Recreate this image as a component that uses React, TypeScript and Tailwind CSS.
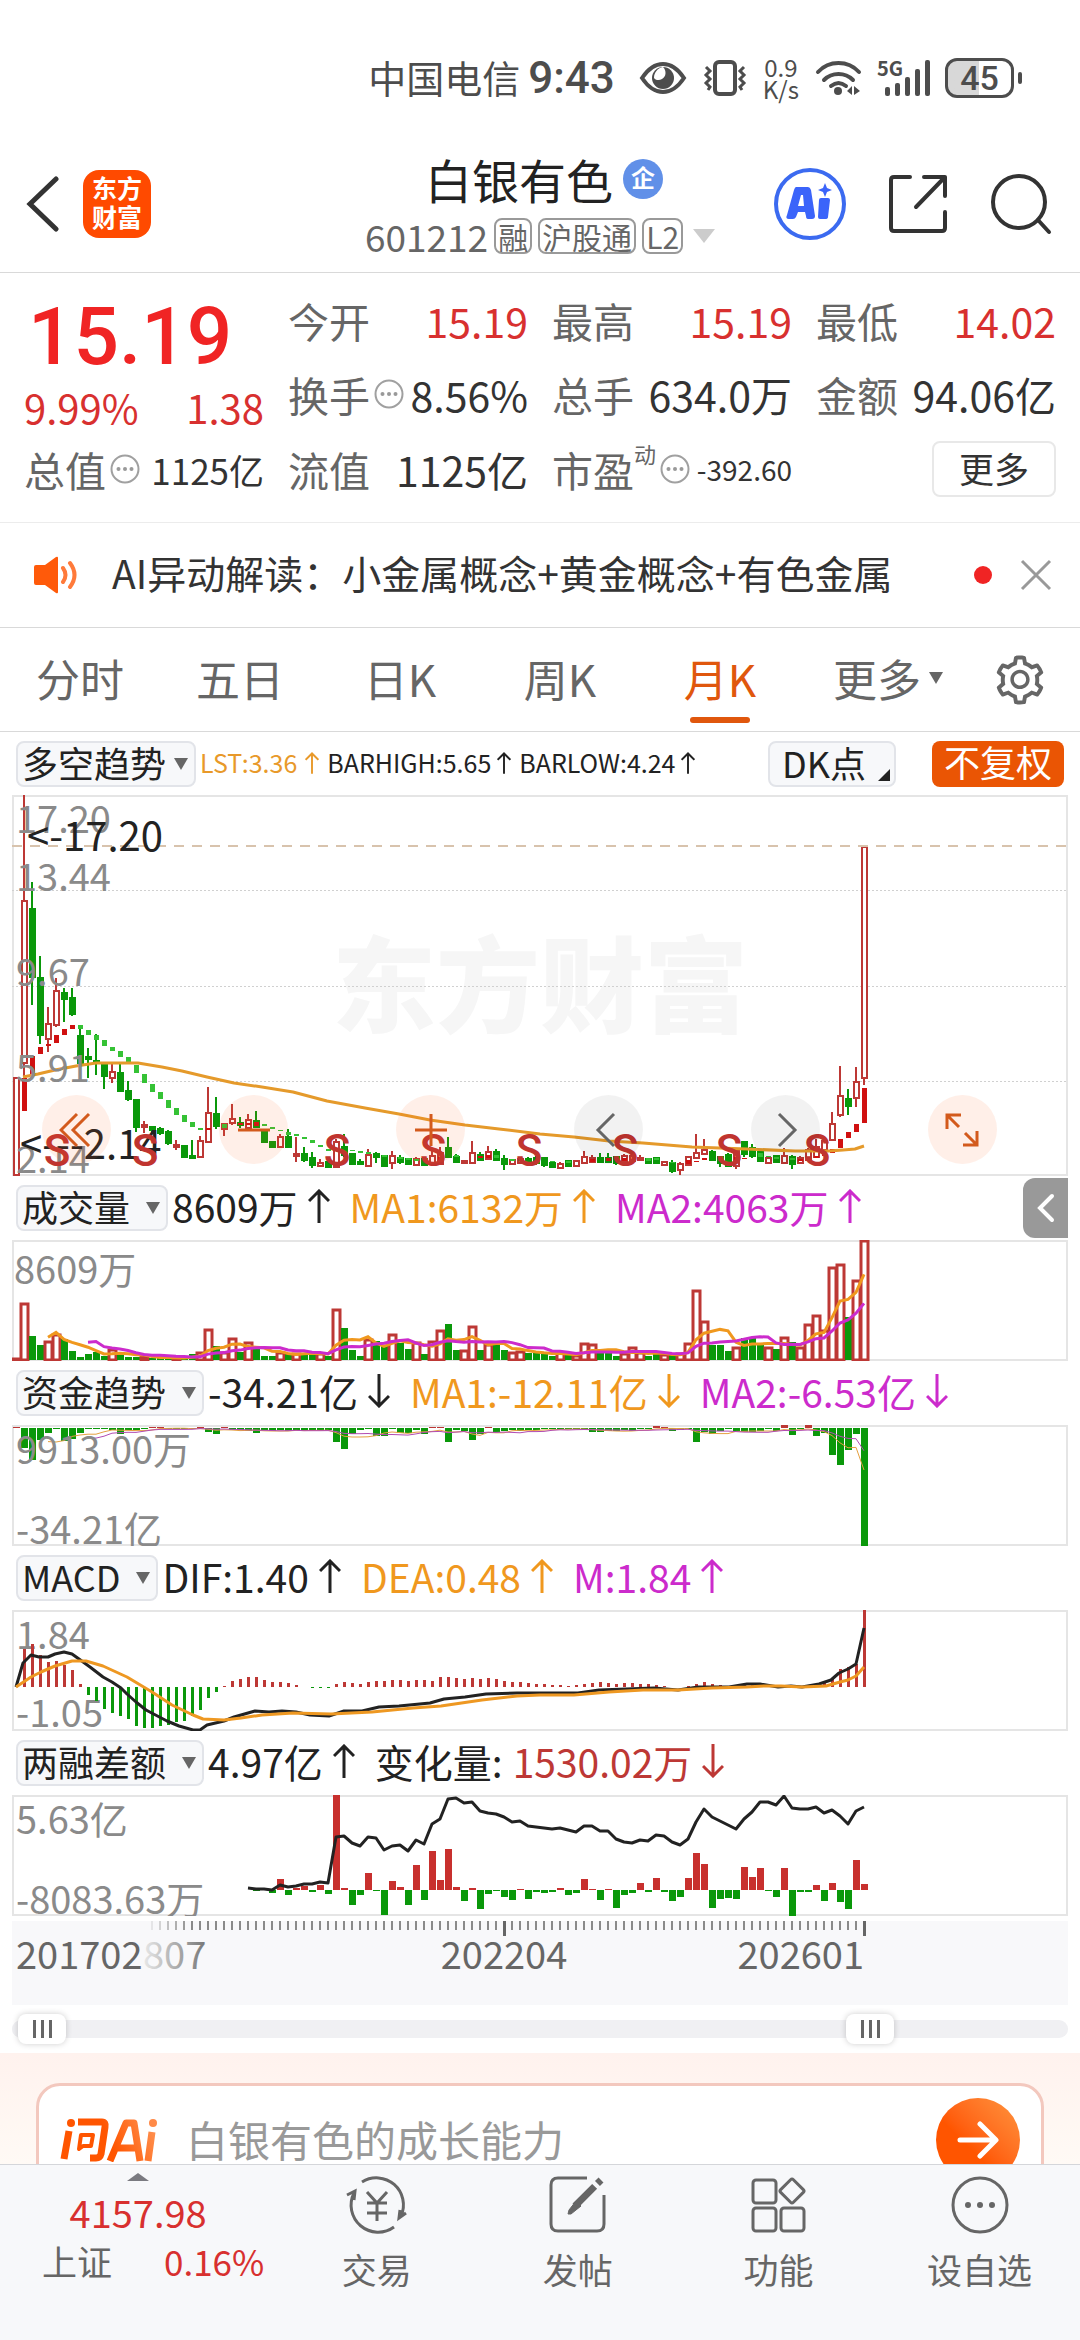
import React from "react";
import { AiOutlineSetting } from "react-icons/ai";

type Candle = [high: number, top: number, bottom: number, low: number, up: 0 | 1];

const STEP = 8;
const xAt = (i: number) => 4 + i * STEP;

const RED = "#bd3835";
const GREEN = "#0a980a";

// monthly candles, in chart units measured down from the top of the panel
const candles: Candle[] = [
  [283, 283, 380, 380, 1], [0, 106, 268, 281, 1], [87, 114, 182, 210, 0], [161, 183, 240, 249, 0],
  [212, 229, 244, 257, 1], [183, 196, 230, 232, 1], [193, 198, 204, 227, 0], [193, 203, 219, 221, 0],
  [233, 241, 268, 268, 0], [253, 262, 264, 283, 0], [239, 266, 268, 280, 0], [269, 270, 281, 294, 0],
  [269, 277, 283, 288, 1], [269, 278, 296, 297, 0], [286, 296, 304, 306, 0], [304, 305, 332, 337, 0],
  [326, 330, 332, 338, 1], [331, 332, 335, 339, 0], [332, 334, 338, 340, 0], [335, 337, 348, 350, 0],
  [345, 350, 352, 355, 1], [350, 351, 362, 363, 0], [345, 361, 363, 363, 0], [341, 346, 362, 362, 1],
  [292, 318, 347, 347, 1], [302, 319, 331, 334, 0], [328, 329, 334, 341, 1], [309, 324, 328, 330, 1],
  [322, 328, 330, 333, 0], [319, 325, 333, 333, 1], [316, 326, 332, 332, 0], [334, 335, 347, 348, 0],
  [346, 347, 352, 353, 0], [339, 342, 352, 352, 1], [334, 342, 352, 352, 0], [342, 359, 361, 367, 1],
  [352, 359, 365, 367, 0], [357, 363, 370, 373, 0], [364, 368, 371, 371, 1], [365, 367, 372, 372, 0],
  [344, 347, 372, 372, 1], [339, 352, 360, 362, 0], [358, 359, 369, 369, 0], [364, 367, 369, 369, 0],
  [354, 360, 371, 371, 1], [357, 359, 362, 368, 0], [360, 361, 371, 371, 0], [356, 361, 368, 374, 1],
  [360, 363, 367, 369, 0], [363, 364, 369, 369, 0], [362, 364, 370, 370, 1], [362, 364, 370, 370, 0],
  [354, 361, 368, 370, 1], [352, 358, 369, 370, 1], [342, 353, 362, 363, 0], [359, 362, 367, 368, 0],
  [365, 366, 368, 368, 1], [346, 358, 368, 368, 1], [357, 360, 365, 366, 0], [351, 357, 364, 364, 1],
  [354, 357, 365, 366, 0], [360, 364, 369, 375, 0], [364, 365, 369, 369, 1], [362, 364, 368, 369, 1],
  [362, 364, 368, 369, 0], [361, 363, 368, 370, 0], [362, 363, 370, 372, 0], [367, 368, 372, 373, 0],
  [367, 369, 373, 374, 1], [365, 366, 371, 372, 0], [365, 366, 371, 371, 1], [356, 362, 368, 369, 1],
  [360, 363, 367, 368, 1], [358, 363, 367, 367, 0], [358, 363, 367, 368, 0], [361, 362, 368, 370, 0],
  [359, 361, 367, 367, 1], [358, 361, 366, 367, 1], [360, 363, 365, 366, 1], [363, 364, 368, 369, 0],
  [362, 363, 368, 369, 0], [366, 367, 370, 371, 1], [365, 368, 376, 378, 0], [367, 369, 375, 380, 1],
  [361, 362, 370, 370, 1], [339, 358, 363, 364, 1], [344, 355, 359, 359, 1], [355, 357, 365, 366, 0],
  [361, 362, 368, 372, 0], [358, 360, 371, 371, 0], [354, 356, 371, 374, 1], [346, 347, 359, 362, 0],
  [349, 353, 361, 363, 0], [356, 357, 366, 367, 0], [361, 363, 368, 369, 1], [360, 361, 367, 368, 0],
  [353, 361, 368, 369, 1], [360, 362, 369, 374, 0], [361, 363, 368, 368, 1], [353, 355, 365, 365, 1],
  [344, 352, 362, 363, 1], [344, 346, 355, 358, 1], [317, 329, 345, 346, 1], [271, 301, 320, 322, 1],
  [294, 304, 311, 320, 0], [272, 287, 303, 312, 1], [51, 52, 283, 290, 1],
];

// trend blocks: [index, top, bottom, up]
const blocks: [number, number, number, 0 | 1][] = [
  [1, 283, 316, 1], [2, 261, 281, 1], [3, 252, 259, 1], [4, 249, 251, 1], [5, 240, 248, 1],
  [6, 234, 240, 1], [7, 230, 234, 1], [8, 230, 234, 0], [9, 235, 240, 0], [10, 240, 245, 0],
  [11, 245, 251, 0], [12, 252, 256, 0], [13, 256, 262, 0], [14, 262, 267, 0], [15, 270, 278, 0],
  [16, 279, 288, 0], [17, 289, 297, 0], [18, 297, 304, 0], [19, 305, 313, 0], [20, 313, 320, 0],
  [21, 320, 327, 0], [22, 327, 332, 0], [23, 333, 335, 0], [24, 333, 335, 1], [26, 329, 333, 0],
  [28, 328, 330, 1], [29, 328, 330, 1], [30, 327, 331, 1], [31, 329, 331, 0], [32, 332, 334, 0],
  [33, 335, 336, 0], [34, 337, 340, 0], [35, 339, 341, 0], [36, 342, 344, 0], [37, 345, 348, 0],
  [38, 350, 352, 0], [39, 354, 356, 0], [42, 355, 356, 0], [43, 356, 358, 0], [44, 357, 359, 0],
  [46, 360, 362, 0], [48, 362, 364, 0], [49, 363, 365, 0], [50, 364, 366, 0], [51, 363, 365, 0],
  [53, 362, 366, 1], [55, 360, 362, 0], [58, 361, 363, 1], [59, 360, 363, 1], [60, 360, 363, 0],
  [62, 364, 366, 0], [63, 364, 366, 0], [65, 365, 367, 0], [67, 366, 367, 0], [69, 366, 368, 0],
  [72, 364, 367, 1], [74, 363, 366, 1], [76, 363, 366, 1], [79, 363, 366, 0], [80, 363, 365, 0],
  [82, 367, 368, 0], [84, 365, 369, 1], [85, 366, 367, 1], [86, 363, 365, 1], [88, 364, 366, 0],
  [90, 362, 366, 1], [91, 363, 364, 1], [93, 358, 362, 0], [94, 361, 362, 0], [95, 362, 364, 0],
  [97, 363, 365, 0], [98, 364, 366, 1], [100, 361, 363, 1], [101, 359, 361, 1], [102, 354, 358, 1],
  [103, 344, 353, 1], [104, 337, 343, 1], [105, 329, 337, 1], [106, 293, 328, 1],
];

const volume = [
  1, 56, 24, 15, 18, 25, 21, 9, 3, 6, 8, 4, 10, 6, 3, 3, 3, 2, 2, 2, 2, 2, 6, 7, 30, 14, 7, 21, 8, 17,
  11, 4, 4, 7, 7, 6, 7, 7, 6, 4, 50, 32, 10, 4, 20, 19, 15, 25, 17, 11, 17, 6, 18, 29, 36, 10, 9, 33,
  10, 15, 15, 10, 7, 8, 7, 8, 6, 4, 7, 5, 4, 16, 15, 8, 8, 4, 6, 12, 7, 4, 6, 5, 5, 6, 16, 69, 38, 15,
  15, 9, 12, 22, 22, 15, 12, 11, 22, 18, 12, 35, 44, 29, 92, 95, 43, 79, 119,
];

const funds = [
  1, -20, -32, -12, -5, -1, -13, -11, -5, -1, -1, -1, -2, -6, -2, -2, -1, 1, 1, -1, -1, -1, -1, 1, -4,
  -6, 1, -2, -2, -3, -5, -2, -3, -2, -3, -2, -3, -2, -2, -2, -14, -21, -6, -2, -1, -8, -8, -1, -5, -5,
  -2, -6, 1, 1, -14, -2, -3, -12, -6, 1, -4, -3, -2, -3, -2, -2, -1, -1, -1, -1, -1, -1, -4, -4, -3,
  -3, -2, -3, -1, -1, 2, 1, -3, -2, -1, -14, -4, -6, -3, -1, -3, -4, -4, -3, -1, -3, 3, -7, -1, 3, -8,
  -5, -27, -37, -22, -6, -118,
];

const macd = [
  0, 38, 43, 32, 25, 26, 22, 17, 3, -8, -14, -22, -26, -29, -32, -39, -41, -41, -39, -38, -35, -34,
  -29, -23, -11, -5, 1, 6, 8, 10, 10, 7, 5, 5, 4, 2, 0, -1, -1, -1, 3, 5, 4, 3, 5, 6, 6, 7, 7, 6, 7, 7,
  6, 10, 10, 9, 8, 9, 8, 9, 8, 6, 5, 5, 4, 3, 3, 2, 2, 1, 2, 3, 4, 5, 4, 3, 4, 4, 3, 3, 2, 1, 0, 0, 1,
  3, 5, 3, 2, 1, 2, 3, 3, 2, 1, 0, 1, 1, 0, 1, 2, 4, 9, 18, 20, 23, 77,
];

// margin balance change, first value is for month 30
const margin = [
  -1, 0, -3, 11, -5, 2, 4, -2, 5, -4, 95, 2, -15, -5, 17, -1, -25, 9, 3, -15, 25, -10, 39, 10, 41, 3,
  -11, 2, -19, -4, -1, -7, -10, 1, -9, -2, -3, -2, 2, -5, -3, 11, 1, -10, 1, -18, -5, -3, 7, -2, 12,
  -2, -11, -7, 12, 37, 26, -18, -9, -8, -9, 23, 13, 22, -1, -7, 22, -26, -2, -2, 5, -11, 7, -12, -19,
  30, 6,
];

const marginLine = [
  93, 94, 94, 95, 90, 92, 91, 89, 89, 87, 88, 42, 41, 48, 51, 42, 43, 55, 51, 50, 56, 45, 49, 29, 24, 4,
  3, 8, 7, 16, 18, 19, 22, 27, 26, 31, 32, 33, 34, 33, 35, 37, 31, 31, 36, 36, 44, 47, 48, 45, 46, 40,
  41, 47, 50, 44, 27, 14, 22, 26, 30, 34, 24, 17, 7, 7, 10, 1, 13, 14, 14, 12, 18, 15, 21, 29, 16, 12,
];

const lstLine =
  "11,282 26,279 43,275 64,271 84,268 105,268 126,268 150,272 170,276 195,282 222,288 250,292 281,297 315,306 353,313 387,319 418,325 453,330 487,334 528,339 562,342 597,346 631,348 680,352 735,354 783,356 817,356 831,355 843,354 852,351";
const difLine =
  "4,77 11,53 19,45 27,47 36,47 43,44 52,42 60,44 67,49 78,57 91,67 100,72 109,78 115,84 124,92 134,100 155,111 167,116 181,120 188,120 195,115 212,111 222,107 243,101 257,102 270,101 284,102 298,105 317,106 332,101 350,101 367,97 387,96 418,93 432,89 453,87 474,84 505,83 528,83 549,83 566,83 587,80 614,79 642,78 666,80 686,77 704,77 717,77 735,74 748,74 766,77 779,76 790,77 807,74 819,70 827,63 836,59 844,54 852,18";
const deaLine =
  "4,77 19,67 29,62 43,56 60,51 74,51 91,56 115,67 140,82 160,95 181,105 191,109 212,110 229,108 250,105 281,103 319,104 360,102 401,98 429,96 470,90 505,86 528,85 562,85 597,82 631,80 666,80 700,78 735,77 752,76 769,76 790,77 814,76 828,72 836,70 844,66 852,57";

function averageLine(values: number[], days: number, zero: number) {
  const points: string[] = [];
  for (let i = days - 1; i < values.length; i++) {
    let sum = 0;
    for (let j = 0; j < days; j++) sum += values[i - j];
    points.push(`${xAt(i)},${(zero - sum / days).toFixed(1)}`);
  }
  return points.join(" ");
}

function Caret() {
  return (
    <svg viewBox="0 0 14 12" className="h-3 w-3.5 shrink-0 fill-[#666]">
      <path d="M0 0h14L7 12z" />
    </svg>
  );
}

function Arrow({ down = false, small = false }: { down?: boolean; small?: boolean }) {
  return (
    <svg
      viewBox="0 0 22 34"
      className={small ? "h-[22px] w-3.5" : "h-[34px] w-[22px]"}
      fill="none"
      stroke="currentColor"
      strokeWidth="3"
    >
      {down ? <path d="M11 0v32M1 22l10 10 10-10" /> : <path d="M11 34V2M1 12L11 2l10 10" />}
    </svg>
  );
}

function InfoDots() {
  return (
    <svg viewBox="0 0 30 30" className="ml-1 size-[30px] shrink-0" aria-hidden="true">
      <circle cx="15" cy="15" r="13.5" fill="none" stroke="#a0a0a0" strokeWidth="2" />
      <g fill="#999">
        <circle cx="8.5" cy="15" r="2" />
        <circle cx="15" cy="15" r="2" />
        <circle cx="21.5" cy="15" r="2" />
      </g>
    </svg>
  );
}

function StatusBar() {
  return (
    <div className="flex h-[136px] items-center justify-end pt-5 pr-[58px] text-[#4d4d4d]">
      <span className="pb-0.5 text-[38px] leading-none">中国电信</span>
      <span className="ml-2 font-['Roboto','Noto_Sans_CJK_SC',sans-serif] text-[44px] leading-none font-medium">9:43</span>
      <svg viewBox="0 0 48 34" className="ml-6 h-[34px] w-12">
        <path d="M3 17C9 8 16 3 24 3s15 5 21 14c-6 9-13 14-21 14S9 26 3 17z" fill="none" stroke="#4d4d4d" strokeWidth="4" />
        <circle cx="24" cy="17" r="11" fill="#4d4d4d" />
        <path d="M24 6c4 4 3 10-1 12-3 2-7 1-8-1 0-6 4-10 9-11z" fill="#fff" />
      </svg>
      <svg viewBox="0 0 44 36" className="ml-4 h-9 w-11" fill="none" stroke="#4d4d4d">
        <rect x="12" y="2" width="20" height="32" rx="4" strokeWidth="4" />
        <path d="M3 7l4 4-4 4 4 4-4 4 4 4-2 3M41 7l-4 4 4 4-4 4 4 4-4 4 2 3" strokeWidth="3" />
      </svg>
      <span className="ml-4 text-center text-2xl leading-[22px]">
        0.9
        <br />
        K/s
      </span>
      <svg viewBox="0 0 48 36" className="ml-4 h-9 w-12" fill="none" stroke="#4d4d4d" strokeWidth="4" strokeLinecap="round">
        <path d="M3 12C14 0 33 0 44 12M9 20c8-8 21-8 29 0M16 26c5-4 10-4 15 0" />
        <circle cx="23" cy="31" r="4" fill="#4d4d4d" stroke="none" />
        <path d="M32 31l5-5v9zM39 26l6 5-6 4z" fill="#4d4d4d" stroke="none" />
      </svg>
      <svg viewBox="0 0 54 38" className="ml-3.5 h-[38px] w-[54px]" fill="#4d4d4d">
        <text x="0" y="17" fontSize="20" fontWeight="700">5G</text>
        <rect x="8" y="28" width="5" height="9" rx="2" />
        <rect x="18" y="24" width="5" height="13" rx="2" />
        <rect x="28" y="18" width="5" height="19" rx="2" />
        <rect x="38" y="10" width="5" height="27" rx="2" />
        <rect x="48" y="1" width="5" height="36" rx="2" />
      </svg>
      <div className="ml-3.5 flex h-10 w-[69px] items-center justify-center rounded-xl border-[3px] border-[#4d4d4d] bg-linear-to-r from-[#d8d8d8] from-50% to-white to-50% font-['Roboto','Noto_Sans_CJK_SC',sans-serif] text-[34px] leading-none font-medium">
        45
      </div>
      <span className="ml-1 h-3 w-1 rounded-full bg-[#4d4d4d]" />
    </div>
  );
}

function TitleBar() {
  return (
    <header className="grid h-[137px] grid-cols-[1fr_auto_1fr] items-center border-b border-[#d9d9d9]">
      <div className="flex items-center gap-6 pl-[26px]">
        <button aria-label="返回">
          <svg viewBox="0 0 33 56" className="h-14 w-[33px]" fill="none" stroke="#333" strokeWidth="5" strokeLinecap="round">
            <path d="M30 3L4 28l26 25" />
          </svg>
        </button>
        <div className="flex size-[68px] items-center justify-center rounded-2xl bg-[#ff4a00] pb-1 text-center text-[25px] leading-[29px] font-bold text-white">
          东方
          <br />
          财富
        </div>
      </div>
      <div className="flex flex-col items-center gap-3.5">
        <h1 className="flex items-center gap-2.5 pl-2 text-[47px] leading-[50px] text-[#222]">
          白银有色
          <span className="flex size-10 items-center justify-center rounded-full bg-[#6190e8] pb-1 text-2xl font-bold text-white">
            企
          </span>
        </h1>
        <div className="flex items-center gap-1.5 leading-[32px] text-[#666]">
          <span className="text-[37px] leading-9">601212</span>
          <span className="rounded-lg border-2 border-[#999] px-0.5 text-[30px]">融</span>
          <span className="rounded-lg border-2 border-[#999] px-0.5 text-[30px]">沪股通</span>
          <span className="rounded-lg border-2 border-[#999] px-0.5 text-[30px]">L2</span>
          <svg viewBox="0 0 22 14" className="ml-1 h-3.5 w-[22px] fill-[#ccc]">
            <path d="M0 0h22L11 14z" />
          </svg>
        </div>
      </div>
      <div className="flex items-center justify-end gap-[42px] pr-7">
        <button aria-label="AI">
          <svg viewBox="0 0 72 72" className="size-[72px]" fill="#3b64fa">
            <circle cx="36" cy="36" r="34" fill="none" stroke="#3b6af0" strokeWidth="4" />
            <path
              fillRule="evenodd"
              d="M22 19h12q2 0 3 3l4 26q0 3-3 3h-4q-2 0-2-3l-1-4h-7l-2 5q-1 2-3 2h-4q-4 0-2-4l7-25q1-3 2-3zM27 27l-3 11h6l-1-11z"
            />
            <path d="M47 30h7q2 0 2 2l-2 17q0 2-3 2h-5q-2 0-2-2l1-17q0-2 2-2z" />
            <path d="M51 15l2 5 5 2-5 2-2 5-2-5-5-2 5-2z" />
          </svg>
        </button>
        <button aria-label="分享">
          <svg viewBox="0 0 60 60" className="size-[60px]" fill="none" stroke="#333" strokeWidth="4" strokeLinecap="round" strokeLinejoin="round">
            <path d="M22 3H6q-3 0-3 3v48q0 3 3 3h48q3 0 3-3V38M36 3h21v19M57 3L28 33" />
          </svg>
        </button>
        <button aria-label="搜索">
          <svg viewBox="0 0 62 62" className="size-[62px]" fill="none" stroke="#333" strokeWidth="4" strokeLinecap="round">
            <circle cx="29" cy="29" r="26" />
            <path d="M48 47l11 12" />
          </svg>
        </button>
      </div>
    </header>
  );
}

function Quote({ label, value, red = false, info = false }: { label: string; value: string; red?: boolean; info?: boolean }) {
  return (
    <div className="flex items-center justify-between whitespace-nowrap">
      <dt className="flex items-center text-[#666]">
        {label}
        {info && <InfoDots />}
      </dt>
      <dd className={red ? "text-[#d8302f]" : "text-[#333]"}>{value}</dd>
    </div>
  );
}

function QuotePanel() {
  return (
    <section className="border-b border-[#ececec] px-6 pt-2.5 pb-[15px]">
      <dl className="grid grid-cols-4 grid-rows-[74px_74px_76px] gap-x-6 text-[41px] leading-none">
        <div className="row-span-2 text-[#f02424]">
          <dt className="sr-only">最新价</dt>
          <dd className="flex h-24 items-center pt-3 pl-1 font-['Roboto','Noto_Sans_CJK_SC',sans-serif] text-[80px] font-medium">
            15.19
          </dd>
          <dd className="flex h-14 items-center justify-between text-[40px] text-[#d8302f]">
            <span>9.99%</span>
            <span>1.38</span>
          </dd>
        </div>
        <Quote label="今开" value="15.19" red />
        <Quote label="最高" value="15.19" red />
        <Quote label="最低" value="14.02" red />
        <Quote label="换手" value="8.56%" info />
        <Quote label="总手" value="634.0万" />
        <Quote label="金额" value="94.06亿" />
        <div className="flex items-center justify-between whitespace-nowrap">
          <dt className="flex items-center text-[#666]">
            总值
            <InfoDots />
          </dt>
          <dd className="text-[35px] text-[#333]">1125亿</dd>
        </div>
        <Quote label="流值" value="1125亿" />
        <div className="flex items-center justify-between whitespace-nowrap">
          <dt className="flex items-center text-[#666]">
            市盈
            <span className="pb-8 text-[22px] leading-none">动</span>
            <InfoDots />
          </dt>
          <dd className="text-[28px] text-[#333]">-392.60</dd>
        </div>
        <div className="flex items-center justify-end">
          <button className="h-14 w-[124px] rounded-lg border-2 border-[#e8e8e8] pb-1 text-[35px] leading-none text-[#333]">
            更多
          </button>
        </div>
      </dl>
    </section>
  );
}

function AlertBar() {
  return (
    <section className="flex h-[105px] items-center border-b border-[#d9d9d9] pr-7 pl-[34px]">
      <svg viewBox="0 0 46 38" className="h-[38px] w-[46px]" fill="#ff5a0a">
        <path d="M2 9h9L22 1q2-1 2 1v34q0 2-2 1l-11-8H2q-2 0-2-2V11q0-2 2-2z" />
        <path d="M29 12q5 7 0 14M36 7q9 12 0 24" fill="none" stroke="#ff7a3a" strokeWidth="4" strokeLinecap="round" />
      </svg>
      <p className="ml-8 pb-1.5 text-[39px] leading-none whitespace-nowrap text-[#333]">
        AI异动解读：小金属概念+黄金概念+有色金属
      </p>
      <span className="ml-auto size-[18px] rounded-full bg-[#f02424]" />
      <button aria-label="关闭" className="ml-7">
        <svg viewBox="0 0 32 32" className="size-8" stroke="#999" strokeWidth="3">
          <path d="M2 2l28 28M30 2L2 30" />
        </svg>
      </button>
    </section>
  );
}

const periods = ["分时", "五日", "日K", "周K", "月K"];

function PeriodTabs() {
  return (
    <nav className="grid h-[104px] grid-cols-[repeat(6,4fr)_3fr] border-b border-[#d9d9d9] text-[44px] leading-none text-[#666]">
      {periods.map((name) => (
        <button
          key={name}
          className={name === "月K" ? "relative pb-1 text-[#e0570d]" : "pb-1"}
          aria-current={name === "月K"}
        >
          {name}
          {name === "月K" && (
            <span className="absolute inset-x-0 bottom-2 mx-auto h-1.5 w-[60px] rounded-full bg-[#e0570d]" />
          )}
        </button>
      ))}
      <button className="flex items-center justify-center gap-2 pb-1 pl-4">
        更多
        <Caret />
      </button>
      <button aria-label="设置" className="flex items-center justify-center">
        <AiOutlineSetting className="size-[56px]" />
      </button>
    </nav>
  );
}

function Chip({ children, tight = false }: { children: string; tight?: boolean }) {
  return (
    <button
      className={`flex h-[46px] items-center rounded-lg border-2 border-[#e2e4e9] bg-[#f7f8fa] pr-1.5 pl-1 text-[36px] leading-none text-[#222] ${tight ? "gap-2" : "gap-4"}`}
    >
      <span className="pb-1">{children}</span>
      <Caret />
    </button>
  );
}

type LegendItem = { text: string; color: string; down?: boolean; label?: string };

function Legend({ name, items, children }: { name: string; items: LegendItem[]; children?: React.ReactNode }) {
  return (
    <div className="flex h-16 items-center pl-1 text-[39px] leading-none whitespace-nowrap">
      <Chip>{name}</Chip>
      <div className="flex items-center gap-5 pb-1 pl-1">
        {items.map((item) => (
          <span key={item.text} className={`flex items-center gap-2.5 ${item.color}`}>
            {item.label && <span className="text-[#222]">{item.label}</span>}
            {item.text}
            <Arrow down={item.down} />
          </span>
        ))}
      </div>
      {children}
    </div>
  );
}

function Panel({ height, label, children }: { height: number; label: string; children: React.ReactNode }) {
  return (
    <svg viewBox={`0 0 1056 ${height}`} className="block w-full" role="img" aria-label={label}>
      <rect x="1" y="1" width="1054" height={height - 2} fill="none" stroke="#e5e5e5" strokeWidth="2" />
      {children}
    </svg>
  );
}

function AxisText({ x = 4, y, children }: { x?: number; y: number; children: string }) {
  return (
    <text x={x} y={y} fontSize="38" fill="#8a8a8a">
      {children}
    </text>
  );
}

function ToolButton({ label, gray = false, children }: { label: string; gray?: boolean; children: React.ReactNode }) {
  return (
    <button
      aria-label={label}
      className={`flex size-[69px] items-center justify-center rounded-full ${gray ? "bg-black/5 text-[#666]" : "bg-[#ff6020]/10 text-[#d35a1c]"}`}
    >
      <svg viewBox="0 0 36 36" className="size-9" fill="none" stroke="currentColor" strokeWidth="3">
        {children}
      </svg>
    </button>
  );
}

function KLine() {
  return (
    <div className="relative">
      <Panel height={381} label="月K线">
        <text x="320" y="230" fontSize="104" fontWeight="900" fill="#f6f6f6">
          东方财富
        </text>
        <g stroke="#d0d0d0" strokeDasharray="2 2">
          <path d="M0 95.5h1056M0 191.5h1056M0 286.5h1056" />
        </g>
        {candles.map(([high, top, bottom, low, up], i) => {
          const color = up ? RED : GREEN;
          return (
            <g key={i} stroke={color} strokeWidth="2">
              <path d={`M${xAt(i)} ${high}V${top}M${xAt(i)} ${bottom}V${low}`} />
              <rect x={xAt(i) - 2} y={top} width="5" height={bottom - top} fill={up ? "#fff" : color} />
            </g>
          );
        })}
        {blocks.map(([i, top, bottom, up]) => (
          <rect key={i} x={xAt(i) - 2} y={top} width="5" height={bottom - top} fill={up ? "#d01010" : "#35c235"} />
        ))}
        <path d="M0 51h1056" stroke="#d8c3ad" strokeWidth="2" strokeDasharray="10 8" />
        <polyline points={lstLine} fill="none" stroke="#e59a2b" strokeWidth="3" strokeLinejoin="round" />
        <AxisText y={38}>17.20</AxisText>
        <AxisText y={96}>13.44</AxisText>
        <AxisText y={191}>9.67</AxisText>
        <AxisText y={287}>5.91</AxisText>
        <AxisText y={378}>2.14</AxisText>
        <g fontSize="40" fill="#222">
          <text x="15" y="56">&lt;-17.20</text>
          <text x="8" y="364">&lt;---2.14</text>
        </g>
        <g
          className="font-['Roboto','Noto_Sans_CJK_SC',sans-serif]"
          fontSize="44"
          fontWeight="500"
          fill="#c0342f"
          textAnchor="middle"
        >
          {[45, 133, 325, 421, 517, 613, 717, 805].map((x) => (
            <text key={x} x={x} y="371">
              S
            </text>
          ))}
        </g>
      </Panel>
      <div className="absolute right-[71px] bottom-3 left-[30px] flex justify-between">
        <ToolButton label="最早">
          <path d="M18 2L2 18l16 16M30 2L14 18l16 16" />
        </ToolButton>
        <ToolButton label="缩小">
          <path d="M2 18h32" />
        </ToolButton>
        <ToolButton label="放大">
          <path d="M2 18h32M18 2v32" />
        </ToolButton>
        <ToolButton label="左移" gray>
          <path d="M24 2L8 18l16 16" />
        </ToolButton>
        <ToolButton label="右移" gray>
          <path d="M12 2l16 16-16 16" />
        </ToolButton>
        <ToolButton label="全屏">
          <path d="M17 3H3v14M3 3l12 12M19 33h14V19M33 33L21 21" />
        </ToolButton>
      </div>
    </div>
  );
}

function VolumePanel() {
  return (
    <Panel height={121} label="成交量">
      {volume.map((h, i) =>
        candles[i][4] ? (
          <rect key={i} x={xAt(i) - 3} y={120 - h} width="7" height={h} fill="#fff" stroke={RED} strokeWidth="3" />
        ) : (
          <rect key={i} x={xAt(i) - 3} y={120 - h} width="7" height={h} fill={GREEN} />
        ),
      )}
      <polyline points={averageLine(volume, 5, 120)} fill="none" stroke="#f0981e" strokeWidth="3" />
      <polyline points={averageLine(volume, 10, 120)} fill="none" stroke="#cc2bcc" strokeWidth="3" />
      <AxisText x={2} y={44}>8609万</AxisText>
    </Panel>
  );
}

function FundsPanel() {
  return (
    <Panel height={121} label="资金趋势">
      {funds.map((v, i) => (
        <rect key={i} x={xAt(i) - 3} y={v > 0 ? 3 - v : 3} width="7" height={Math.abs(v)} fill={v > 0 ? RED : GREEN} />
      ))}
      <polyline points={averageLine(funds, 5, 3)} fill="none" stroke="#e5a040" />
      <polyline points={averageLine(funds, 10, 3)} fill="none" stroke="#b24bb2" />
      <AxisText y={39}>9913.00万</AxisText>
      <AxisText y={119}>-34.21亿</AxisText>
    </Panel>
  );
}

function MacdPanel() {
  return (
    <Panel height={121} label="MACD">
      <AxisText y={39}>1.84</AxisText>
      <AxisText y={117}>-1.05</AxisText>
      {macd.map((v, i) => (
        <rect key={i} x={xAt(i) - 1} y={v > 0 ? 77 - v : 77} width="3" height={Math.abs(v)} fill={v > 0 ? RED : GREEN} />
      ))}
      <polyline points={difLine} fill="none" stroke="#222" strokeWidth="3" strokeLinejoin="round" />
      <polyline points={deaLine} fill="none" stroke="#ee9822" strokeWidth="3" strokeLinejoin="round" />
    </Panel>
  );
}

function MarginPanel() {
  return (
    <Panel height={121} label="两融差额">
      {margin.map((v, i) => (
        <rect key={i} x={xAt(i + 30) - 3} y={v > 0 ? 95 - v : 95} width="7" height={Math.abs(v)} fill={v > 0 ? "#c8302e" : GREEN} />
      ))}
      <polyline
        points={marginLine.map((y, i) => `${xAt(i + 29)},${y}`).join(" ")}
        fill="none"
        stroke="#222"
        strokeWidth="3"
        strokeLinejoin="round"
      />
      <AxisText y={39}>5.63亿</AxisText>
      <AxisText y={119}>-8083.63万</AxisText>
    </Panel>
  );
}

function TimeAxis() {
  const ticks = Array.from({ length: 90 }, (_, i) => i + 17);
  return (
    <svg viewBox="0 0 1056 84" className="mt-[5px] block w-full bg-[#f8f8fa]">
      <defs>
        <linearGradient id="fade">
          <stop offset="0" stopColor="#e8e8e8" />
          <stop offset="1" stopColor="#777" />
        </linearGradient>
      </defs>
      {ticks.map((i) => {
        const major = i === 61 || i === 106;
        return (
          <rect
            key={i}
            x={xAt(i) - 1}
            y="0"
            width={major ? 3 : 2}
            height={major ? 15 : 9}
            fill={major ? "#666" : "#8a8a8a"}
            opacity={Math.min(1, (i - 16) / 6)}
          />
        );
      })}
      <g fontSize="38" fill="#666">
        <text x="4" y="48">201702</text>
        <text x="131" y="48" fill="url(#fade)">807</text>
        <text x="492" y="48" textAnchor="middle">202204</text>
        <text x="852" y="48" textAnchor="end">202601</text>
      </g>
    </svg>
  );
}

const thumb =
  "pointer-events-none absolute inset-0 m-0 w-full appearance-none bg-transparent [&::-webkit-slider-thumb]:pointer-events-auto [&::-webkit-slider-thumb]:h-[30px] [&::-webkit-slider-thumb]:w-12 [&::-webkit-slider-thumb]:appearance-none [&::-webkit-slider-thumb]:rounded-lg [&::-webkit-slider-thumb]:bg-white [&::-webkit-slider-thumb]:bg-[linear-gradient(90deg,#fff_15px,#666_15px,#666_18px,#fff_18px,#fff_23px,#666_23px,#666_26px,#fff_26px,#fff_31px,#666_31px,#666_34px,#fff_34px)] [&::-webkit-slider-thumb]:bg-[length:100%_18px] [&::-webkit-slider-thumb]:bg-center [&::-webkit-slider-thumb]:bg-no-repeat [&::-webkit-slider-thumb]:shadow-[0_0_6px_rgba(0,0,0,0.2)]";

function RangeBar() {
  return (
    <div className="flex h-12 items-center">
      <div className="relative h-[18px] w-full rounded-full bg-[#f0f0f3]">
        <input type="range" min="0" max="1000" defaultValue="6" aria-label="起始月份" className={thumb} />
        <input type="range" min="0" max="1000" defaultValue="827" aria-label="结束月份" className={thumb} />
      </div>
    </div>
  );
}

function AskBar() {
  return (
    <section className="h-[111px] overflow-hidden bg-linear-to-b from-[#fff2ee] to-[#fffaf5] px-9 pt-[30px]">
      <form className="flex h-[114px] items-center rounded-3xl border-3 border-[#f3c8be] bg-white pr-[21px] pl-[21px]">
        <svg viewBox="0 0 98 44" className="h-11 w-[98px] shrink-0">
          <defs>
            <linearGradient id="ask" x1="0" x2="98" y1="44" y2="0" gradientUnits="userSpaceOnUse">
              <stop offset="0.5" stopColor="#ff5500" />
              <stop offset="1" stopColor="#ff9a5c" />
            </linearGradient>
          </defs>
          <g fill="none" stroke="url(#ask)" strokeLinejoin="round">
            <path d="M9 13L4 41M18 4h24q4 0 3 5l-4 27q-1 4-5 4h-6" strokeWidth="7" />
            <path d="M21 17h12l-2 11h-8l-4 3z" strokeWidth="4" />
            <path d="M50 43L66 5h8l6 38M56 30h20M92 14l-4 29" strokeWidth="7" />
          </g>
          <circle cx="11" cy="5" r="4" fill="#ff5500" />
          <circle cx="93" cy="5" r="4" fill="#ff8a48" />
        </svg>
        <input
          aria-label="问AI"
          placeholder="白银有色的成长能力"
          className="ml-7 min-w-0 flex-1 pb-1 text-[42px] leading-none outline-none placeholder:text-[#999]"
        />
        <button
          aria-label="发送"
          className="flex size-[84px] items-center justify-center rounded-full bg-linear-to-tr from-[#ff5500] from-40% to-[#ff943c]"
        >
          <svg viewBox="0 0 42 38" className="h-[38px] w-[42px]" fill="none" stroke="#fff" strokeWidth="5" strokeLinecap="round" strokeLinejoin="round">
            <path d="M3 19h35M23 3l16 16-16 16" />
          </svg>
        </button>
      </form>
    </section>
  );
}

const actions = [
  {
    label: "交易",
    icon: (
      <>
        <path d="M17 7A27 27 0 0 1 56 41M61 38l-7 5 1-8M49 52A27 27 0 0 1 9 18M2 20l8-4-1 9" />
        <path d="M22 17l10 11 10-11M22 28h20M22 38h20M32 28v18" />
      </>
    ),
  },
  {
    label: "发帖",
    icon: (
      <>
        <path d="M41 3H12q-7 0-7 7v39q0 7 7 7h39q7 0 7-7V20" />
        <path d="M55 5L29 31" strokeWidth="7" strokeDasharray="5 4 40" />
        <path d="M30 26l5 5-10 8-3 0 1-4z" fill="currentColor" strokeWidth="1" />
      </>
    ),
  },
  {
    label: "功能",
    icon: (
      <>
        <rect x="6" y="5" width="23" height="23" rx="3" />
        <rect x="6" y="33" width="23" height="23" rx="3" />
        <rect x="34" y="33" width="23" height="23" rx="3" />
        <rect x="36" y="7" width="18" height="18" rx="2" transform="rotate(45 45 16)" />
      </>
    ),
  },
  {
    label: "设自选",
    icon: (
      <>
        <circle cx="32" cy="30" r="27" />
        <g fill="currentColor" stroke="none">
          <circle cx="20" cy="30" r="3" />
          <circle cx="32" cy="30" r="3" />
          <circle cx="44" cy="30" r="3" />
        </g>
      </>
    ),
  },
];

function BottomBar() {
  return (
    <footer className="grid h-44 grid-cols-[11fr_8fr_8fr_8fr_8fr] border-t border-[#d4d6da] bg-[#f7f8fa] text-[#666]">
      <button className="flex flex-col items-center pt-2 leading-none">
        <svg viewBox="0 0 22 8" className="h-2 w-[22px] fill-[#7a7a80]">
          <path d="M0 8L11 0l11 8z" />
        </svg>
        <span className="mt-3 text-[38px] text-[#d8302f]">4157.98</span>
        <span className="mt-3 flex w-full justify-between pr-3 pl-[42px] text-[35px]">
          <span>上证</span>
          <span className="text-[#d8302f]">0.16%</span>
        </span>
      </button>
      {actions.map(({ label, icon }) => (
        <button key={label} className="flex flex-col items-center pt-2.5 text-[35px] leading-none">
          <svg viewBox="0 0 64 60" className="h-[60px] w-16" fill="none" stroke="currentColor" strokeWidth="3">
            {icon}
          </svg>
          <span className="mt-4">{label}</span>
        </button>
      ))}
    </footer>
  );
}

export default function App() {
  return (
    <div className="flex min-h-screen flex-col bg-white font-['Noto_Sans_CJK_SC',sans-serif]">
      <StatusBar />
      <TitleBar />
      <QuotePanel />
      <AlertBar />
      <PeriodTabs />
      <main className="px-3">
        <div className="flex h-[63px] items-center gap-1 px-1 text-[25px] leading-none whitespace-nowrap text-[#222]">
          <Chip tight>多空趋势</Chip>
          <span className="flex items-center gap-2 pb-0.5 text-[#e8992a]">
            LST:3.36
            <Arrow small />
          </span>
          <span className="ml-1 flex items-center gap-1.5 pb-0.5">
            BARHIGH:5.65
            <Arrow small />
          </span>
          <span className="ml-1 flex items-center gap-1.5 pb-0.5">
            BARLOW:4.24
            <Arrow small />
          </span>
          <button className="ml-auto flex h-[46px] w-32 items-center justify-between rounded-lg border-2 border-[#e2e4e9] bg-[#f7f8fa] pr-1 pl-3 text-[36px] leading-none">
            <span className="pb-1">DK点</span>
            <svg viewBox="0 0 12 12" className="mb-1 size-3 self-end fill-[#222]">
              <path d="M12 0v12H0z" />
            </svg>
          </button>
          <button className="ml-8 h-[46px] w-[132px] rounded-lg bg-[#ea5504] pb-1.5 text-[36px] leading-none text-white">
            不复权
          </button>
        </div>
        <KLine />
        <Legend
          name="成交量"
          items={[
            { text: "8609万", color: "text-[#222]" },
            { text: "MA1:6132万", color: "text-[#f0981e]" },
            { text: "MA2:4063万", color: "text-[#cc2bcc]" },
          ]}
        >
          <button aria-label="展开" className="ml-auto flex h-[60px] w-[45px] items-center justify-center rounded-l-xl bg-[#999]">
            <svg viewBox="0 0 18 30" className="h-[30px] w-[18px]" fill="none" stroke="#fff" strokeWidth="4" strokeLinecap="round">
              <path d="M15 3L3 15l12 12" />
            </svg>
          </button>
        </Legend>
        <VolumePanel />
        <Legend
          name="资金趋势"
          items={[
            { text: "-34.21亿", color: "text-[#222]", down: true },
            { text: "MA1:-12.11亿", color: "text-[#f0981e]", down: true },
            { text: "MA2:-6.53亿", color: "text-[#cc2bcc]", down: true },
          ]}
        />
        <FundsPanel />
        <Legend
          name="MACD"
          items={[
            { text: "DIF:1.40", color: "text-[#222]" },
            { text: "DEA:0.48", color: "text-[#f0981e]" },
            { text: "M:1.84", color: "text-[#cc2bcc]" },
          ]}
        />
        <MacdPanel />
        <Legend
          name="两融差额"
          items={[
            { text: "4.97亿", color: "text-[#222]" },
            { label: "变化量:", text: "1530.02万", color: "text-[#bd3835]", down: true },
          ]}
        />
        <MarginPanel />
        <TimeAxis />
        <RangeBar />
      </main>
      <AskBar />
      <BottomBar />
    </div>
  );
}
